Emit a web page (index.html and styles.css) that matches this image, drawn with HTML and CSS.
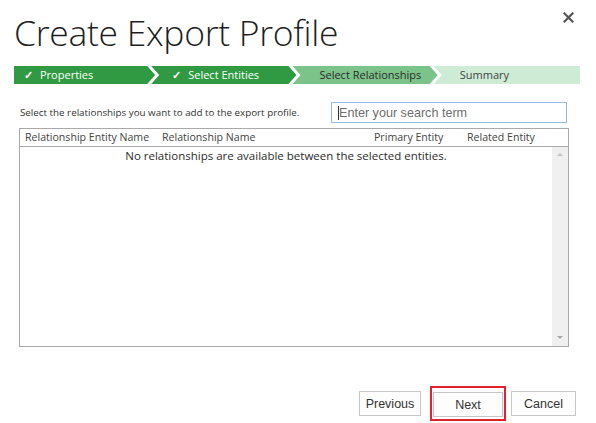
FILE: index.html
```html
<!DOCTYPE html>
<html>
<head>
<meta charset="utf-8">
<link rel="stylesheet" href="styles.css">
</head>
<body>
<div class="dialog">
  <div class="head">
    <h1 class="title">Create Export Profile</h1>
    <button class="close" aria-label="Close">
      <svg width="11" height="11" viewBox="0 0 11 11"><path d="M1.5 1.5 L9.5 9.5 M9.5 1.5 L1.5 9.5" stroke="#555" stroke-width="2.2" stroke-linecap="square"/></svg>
    </button>
  </div>
  <div class="steps">
    <div class="step step-done step-first"><span class="check">&#10003;</span>Properties</div>
    <div class="step step-done step-second"><span class="check">&#10003;</span>Select Entities</div>
    <div class="step step-current">Select Relationships</div>
    <div class="step step-next step-last">Summary</div>
  </div>
  <div class="toolbar">
    <p class="hint">Select the relationships you want to add to the export profile.</p>
    <div class="search"><span class="caret"></span><span class="placeholder">Enter your search term</span></div>
  </div>
  <div class="grid">
    <div class="grid-head">
      <span class="col col-a">Relationship Entity Name</span>
      <span class="col col-b">Relationship Name</span>
      <span class="col col-c">Primary Entity</span>
      <span class="col col-d">Related Entity</span>
    </div>
    <div class="grid-body">
      <div class="empty">No relationships are available between the selected entities.</div>
      <div class="scrollbar">
        <span class="arrow arrow-up"></span>
        <span class="arrow arrow-down"></span>
      </div>
    </div>
  </div>
  <div class="footer">
    <button class="btn btn-prev">Previous</button>
    <span class="highlight"><button class="btn btn-next">Next</button></span>
    <button class="btn btn-cancel">Cancel</button>
  </div>
</div>
</body>
</html>
```
FILE: styles.css
```css
* { box-sizing: border-box; }
html, body { margin: 0; padding: 0; background: #fff; }
body { font-family: "Open Sans", "Noto Sans", sans-serif; color: #333; }

.dialog { width: 596px; height: 423px; padding: 0 16px 0 14px; }

.head { display: flex; justify-content: space-between; align-items: flex-start; }
.title {
  margin: 0; padding-top: 12px;
  font-size: 35.5px; font-weight: 300; line-height: 40px;
  color: #1f1f1f; letter-spacing: -0.3px;
}
.close {
  border: 0; background: none; padding: 0;
  margin: 12px 6px 0 0; width: 11px; height: 11px; display: flex;
}

.steps { display: flex; margin-top: 14px; height: 18px; }
.step {
  height: 18px; line-height: 18px; font-size: 11px;
  white-space: nowrap;
  clip-path: polygon(0 0, calc(100% - 8px) 0, 100% 50%, calc(100% - 8px) 100%, 0 100%, 8px 50%);
  margin-left: -4px;
}
.step-done { background: #2f9a42; color: #fff; }
.step-current { background: #7cc38a; color: #2b2b2b; width: 146px; padding-left: 27px; }
.step-next { background: #cdebd5; color: #444; width: 147px; padding-left: 26px;
  clip-path: polygon(0 0, 100% 0, 100% 100%, 0 100%, 8px 50%); }
.step-first { width: 142px; padding-left: 10px; margin-left: 0;
  clip-path: polygon(0 0, calc(100% - 8px) 0, 100% 50%, calc(100% - 8px) 100%, 0 100%); }
.step-second { width: 146px; padding-left: 21px; }
.check { display: inline-block; width: 16px; font-size: 11px; font-weight: 700; }

.toolbar { display: flex; justify-content: space-between; align-items: center; margin-top: 18px; height: 21px; }
.hint { margin: 0 0 0 6px; font-size: 9.8px; color: #333; }
.search {
  width: 236px; height: 21px; border: 1px solid #98b8de; margin-right: 13px;
  display: flex; align-items: center; padding-left: 6px;
  font-family: "Liberation Sans", Arial, sans-serif; font-size: 12.6px; color: #6d6d6d;
}
.caret { width: 1px; height: 14px; background: #333; }

.grid {
  margin: 5px 0 0 5px; width: 550px; height: 219px;
  border: 1px solid #a9a9a9; display: flex; flex-direction: column;
}
.grid-head {
  display: flex; height: 18px; line-height: 17px;
  border-bottom: 1px solid #a9a9a9; font-size: 10.6px; color: #444;
}
.col-a { padding-left: 5px; width: 142px; }
.col-b { width: 212px; }
.col-c { width: 93px; }
.grid-body { flex: 1; display: flex; }
.empty { flex: 1; text-align: center; font-size: 11.5px; color: #2b2b2b; padding-top: 1px; padding-left: 0; }
.scrollbar {
  width: 16px; background: #f0f0f0;
  display: flex; flex-direction: column; justify-content: space-between; align-items: center;
  padding: 6px 0 7px;
}
.arrow { width: 0; height: 0; border-left: 3.5px solid transparent; border-right: 3.5px solid transparent; }
.arrow-up { border-bottom: 3px solid #c2c2c2; }
.arrow-down { border-top: 3px solid #a8a8a8; }

.footer { display: flex; justify-content: flex-end; align-items: center; margin-top: 39px; padding-right: 4px; }
.btn {
  height: 25px; border: 1px solid #c6c6c6; background: #fdfdfd;
  font-family: "Liberation Sans", Arial, sans-serif; font-size: 12.5px; color: #333;
  padding: 0; cursor: pointer;
}
.btn-prev { width: 62px; }
.highlight { border: 2px solid #e3202b; padding: 4px 1px 2px; margin: 0 5px 0 9px; display: flex; }
.btn-next { width: 70px; }
.btn-cancel { width: 65px; }
```
